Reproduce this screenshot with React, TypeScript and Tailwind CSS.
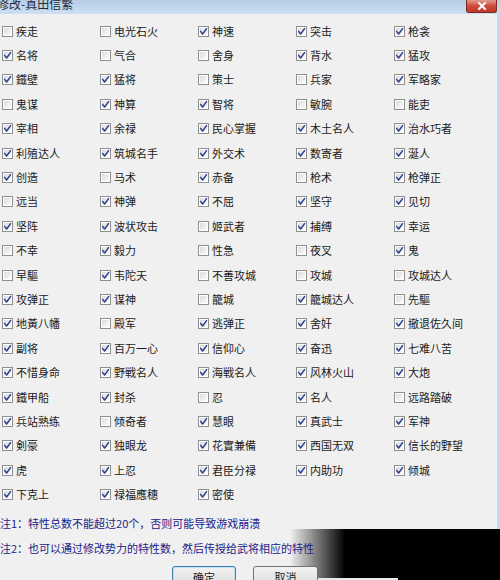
import React from 'react';

/* ------------------ DATA ------------------ */
// [label, checked]
const traits: [string, boolean][] = [
  ['疾走', false], ['电光石火', false], ['神速', true], ['突击', true], ['枪衾', true],
  ['名将', true], ['气合', false], ['舍身', false], ['背水', true], ['猛攻', true],
  ['鐵壁', true], ['猛将', true], ['策士', false], ['兵家', false], ['军略家', true],
  ['鬼谋', false], ['神算', true], ['智将', true], ['敏腕', false], ['能吏', false],
  ['宰相', true], ['余禄', true], ['民心掌握', true], ['木土名人', true], ['治水巧者', true],
  ['利殖达人', true], ['筑城名手', true], ['外交术', true], ['数寄者', true], ['涎人', true],
  ['创造', true], ['马术', false], ['赤备', true], ['枪术', false], ['枪弹正', true],
  ['远当', false], ['神弹', true], ['不屈', true], ['坚守', true], ['见切', true],
  ['坚阵', true], ['波状攻击', true], ['姬武者', false], ['捕缚', true], ['幸运', true],
  ['不幸', false], ['毅力', true], ['性急', false], ['夜叉', false], ['鬼', true],
  ['早驅', false], ['韦陀天', true], ['不善攻城', false], ['攻城', false], ['攻城达人', false],
  ['攻弹正', true], ['谋神', true], ['籠城', false], ['籠城达人', true], ['先驅', false],
  ['地黃八幡', true], ['殿军', false], ['逃弹正', true], ['舍奸', true], ['撤退佐久间', true],
  ['副将', true], ['百万一心', true], ['信仰心', true], ['奋迅', true], ['七难八苦', true],
  ['不惜身命', true], ['野戦名人', true], ['海戦名人', true], ['风林火山', true], ['大炮', true],
  ['鐵甲船', true], ['封杀', true], ['忍', false], ['名人', true], ['远路踏破', false],
  ['兵站熟练', true], ['倾奇者', false], ['慧眼', true], ['真武士', true], ['军神', true],
  ['剣豪', true], ['独眼龙', true], ['花實兼備', true], ['西国无双', true], ['信长的野望', true],
  ['虎', true], ['上忍', true], ['君臣分禄', true], ['内助功', true], ['倾城', true],
  ['下克上', true], ['禄福應穗', true], ['密使', true],
];

/* ------------------ PARTS ------------------ */
function CheckBox({ checked }: { checked: boolean }) {
  return (
    <svg width="11" height="11" viewBox="0 0 11 11" className="shrink-0">
      <defs>
        <linearGradient id="cbfill" x1="0" y1="0" x2="1" y2="1">
          <stop offset="0" stopColor="#dcdcdc" />
          <stop offset="1" stopColor="#fbfbfb" />
        </linearGradient>
      </defs>
      <rect x="0.5" y="0.5" width="10" height="10" fill="#fff" stroke="#8e8f8f" />
      <rect x="2" y="2" width="7" height="7" fill="url(#cbfill)" />
      {checked && (
        <path
          d="M2.6 5.4 L4.6 8 L8.6 2.6"
          fill="none"
          stroke="#2b3f8e"
          strokeWidth="1.5"
          strokeLinecap="round"
          strokeLinejoin="round"
        />
      )}
    </svg>
  );
}

/* ------------------ COMPONENT ------------------ */
export default function App() {
  return (
    <div
      className="relative w-[500px] h-[580px] overflow-hidden bg-[#c3d7ee] text-[#1b1b1b]"
      style={{ fontFamily: '"Noto Sans CJK SC", "Noto Sans", sans-serif' }}
    >
      {/* TITLE BAR */}
      <div className="h-[14px] flex items-end justify-between overflow-hidden bg-linear-to-b from-[#b7cde6] to-[#cddff2]">
        <div className="ml-[-3px] mb-[4px] text-[12px] leading-[12px] text-[#1c2a3c]">
          修改-真田信繁
        </div>
        <div className="mr-[3px] self-start w-[31px] h-[13px] rounded-b-[3px] border border-t-0 border-[#7e2a22] bg-linear-to-b from-[#e0998f] via-[#cc4a3b] to-[#c0392b] flex items-center justify-center">
          <svg width="10" height="8" viewBox="0 0 10 8">
            <path d="M2 1 L8 7 M8 1 L2 7" stroke="#fff" strokeWidth="2" strokeLinecap="square" />
          </svg>
        </div>
      </div>

      {/* CLIENT AREA */}
      <div className="w-[497px] h-[566px] bg-[#f0f0f0]">
        <div className="grid grid-cols-[98px_98px_98px_98px_98px] auto-rows-[24.4px] pt-[5px] pl-[1px]">
          {traits.map(([label, checked]) => (
            <div key={label} className="flex items-center gap-[3px] pl-[1px]">
              <CheckBox checked={checked} />
              <span className="text-[11px] leading-none whitespace-nowrap">{label}</span>
            </div>
          ))}
        </div>

        <div className="relative z-10 mt-[4px] text-[11px] leading-[25px] text-[#22228a] whitespace-nowrap">
          <div>注1：特性总数不能超过20个，否则可能导致游戏崩溃</div>
          <div>注2：也可以通过修改势力的特性数，然后传授给武将相应的特性</div>
        </div>

        <div className="relative z-10 mt-[5px] flex gap-[17px] pl-[172px]">
          <button className="w-[64px] h-[22px] rounded-[3px] border border-[#3c7fb1] bg-linear-to-b from-[#f2f2f2] to-[#dcdcdc] text-[11px] shadow-[inset_0_0_0_1px_#bfe3f8]">
            确定
          </button>
          <button className="w-[65px] h-[22px] rounded-[3px] border border-[#707070] bg-linear-to-b from-[#f2f2f2] to-[#dcdcdc] text-[11px]">
            取消
          </button>
        </div>
      </div>

      {/* dark fade over bottom right */}
      <div className="absolute left-0 right-0 bottom-0 h-[51px] bg-[linear-gradient(to_right,transparent_290px,#000_345px)]" />
      <div className="absolute left-[318px] bottom-0 w-[80px] h-[2px] bg-[#e8e8e8]" />
    </div>
  );
}
